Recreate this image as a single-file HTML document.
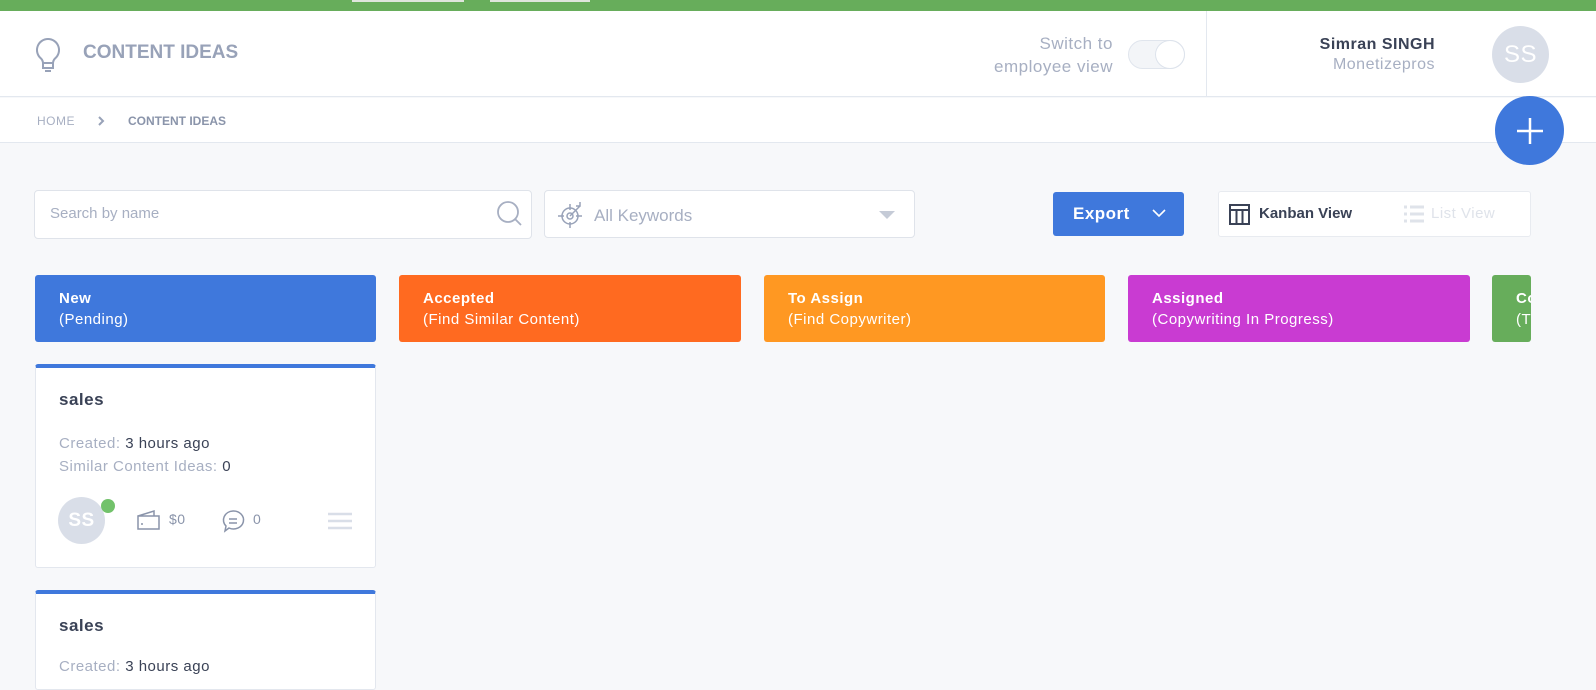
<!DOCTYPE html>
<html><head><style>
*{box-sizing:border-box;margin:0;padding:0}
body{width:1596px;height:676px;overflow:hidden;background:#f7f8fa;font-family:"Liberation Sans",sans-serif;position:relative;letter-spacing:0.5px}
.abs{position:absolute}
.col{position:absolute;top:275px;height:67px;border-radius:3px;color:#fff;font-size:15px;line-height:21px;padding:13px 0 0 24px}
.card{position:absolute;left:35px;width:341px;background:#fff;border:1px solid #e3e7ee;border-top:4px solid #3f78dc;border-radius:3px}
</style></head><body>
<div class="abs" style="left:0;top:0;width:1596px;height:11px;background:#67ad5b"></div>
<div class="abs" style="left:352px;top:0;width:112px;height:2px;background:#dfe6dd"></div>
<div class="abs" style="left:490px;top:0;width:100px;height:2px;background:#dfe6dd"></div>
<div class="abs" style="left:0;top:11px;width:1596px;height:86px;background:#fff;border-bottom:1px solid #e3e8ef"></div>
<svg class="abs" style="left:33px;top:37px" width="30" height="36" viewBox="0 0 30 36"><path d="M15 2a11 11 0 0 0-7 19.5c1.5 1.5 2 3 2 5V31h10v-4.5c0-2 .5-3.5 2-5A11 11 0 0 0 15 2z" fill="none" stroke="#98a2b8" stroke-width="2"/><path d="M10 26h10M12 34h6" stroke="#98a2b8" stroke-width="2"/></svg>
<div class="abs" style="left:83px;top:42px;font-size:19px;font-weight:bold;color:#98a2b8;letter-spacing:0">CONTENT IDEAS</div>
<div class="abs" style="left:940px;top:32px;width:173px;text-align:right;font-size:17px;line-height:23px;color:#a7afc2">Switch to<br>employee view</div>
<div class="abs" style="left:1128px;top:40px;width:57px;height:29px;border-radius:15px;background:#f3f5f8;border:1px solid #e0e5ed"></div>
<div class="abs" style="left:1155px;top:40px;width:30px;height:29px;border-radius:50%;background:#fff;border:1px solid #dde3ec"></div>
<div class="abs" style="left:1206px;top:11px;width:1px;height:86px;background:#e3e8ef"></div>
<div class="abs" style="left:1220px;top:34px;width:215px;text-align:right;font-size:16px;line-height:21px;color:#3a4256;font-weight:bold">Simran SINGH</div>
<div class="abs" style="left:1220px;top:54px;width:215px;text-align:right;font-size:16px;line-height:21px;color:#a7afc2">Monetizepros</div>
<div class="abs" style="left:1492px;top:26px;width:57px;height:57px;border-radius:50%;background:#d9dee8;color:#fff;font-size:24px;text-align:center;line-height:57px">SS</div>
<div class="abs" style="left:0;top:98px;width:1596px;height:45px;background:#fff;border-bottom:1px solid #e3e8ef"></div>
<div class="abs" style="left:37px;top:114px;font-size:12px;color:#a7afc2">HOME</div>
<svg class="abs" style="left:98px;top:116px" width="8" height="10"><path d="M1 1l4 4-4 4" stroke="#98a2b8" stroke-width="2" fill="none"/></svg>
<div class="abs" style="left:128px;top:114px;font-size:12px;color:#8a94aa;font-weight:bold;letter-spacing:0">CONTENT IDEAS</div>
<div class="abs" style="left:1495px;top:96px;width:69px;height:69px;border-radius:50%;background:#3f78dc"></div>
<svg class="abs" style="left:1515px;top:116px" width="30" height="30"><path d="M15 2v26M2 15h26" stroke="#fff" stroke-width="2.5"/></svg>
<div class="abs" style="left:34px;top:190px;width:498px;height:49px;background:#fff;border:1px solid #dfe3ea;border-radius:4px"></div>
<div class="abs" style="left:50px;top:205px;font-size:15px;color:#a7afc2;letter-spacing:0">Search by name</div>
<svg class="abs" style="left:496px;top:200px" width="28" height="28"><circle cx="12" cy="12" r="10" fill="none" stroke="#a7afc2" stroke-width="1.8"/><path d="M19 19l6 6" stroke="#a7afc2" stroke-width="1.8"/></svg>
<div class="abs" style="left:544px;top:190px;width:371px;height:48px;background:#fff;border:1px solid #dfe3ea;border-radius:4px"></div>
<svg class="abs" style="left:556px;top:200px" width="30" height="30"><circle cx="14" cy="16" r="8" fill="none" stroke="#98a2b8" stroke-width="1.5"/><circle cx="14" cy="16" r="3" fill="none" stroke="#98a2b8" stroke-width="1.5"/><path d="M14 4v6M14 22v6M2 16h6M20 16h6M14 16l10-10M20 6h4v-4" stroke="#98a2b8" stroke-width="1.5" fill="none"/></svg>
<div class="abs" style="left:594px;top:206px;font-size:17px;color:#a7afc2;letter-spacing:0">All Keywords</div>
<div class="abs" style="left:879px;top:211px;width:0;height:0;border-left:8px solid transparent;border-right:8px solid transparent;border-top:8px solid #c5cbd7"></div>
<div class="abs" style="left:1053px;top:192px;width:131px;height:44px;background:#3f78dc;border-radius:3px;color:#fff;font-size:17px;font-weight:bold;line-height:44px;padding-left:20px">Export</div>
<svg class="abs" style="left:1152px;top:208px" width="14" height="10"><path d="M1 2l6 6 6-6" stroke="#fff" stroke-width="1.6" fill="none"/></svg>
<div class="abs" style="left:1218px;top:191px;width:313px;height:46px;background:#fff;border:1px solid #e8ebf0;border-radius:3px"></div>
<svg class="abs" style="left:1229px;top:204px" width="22" height="22"><rect x="1" y="1" width="19" height="19" fill="none" stroke="#3a4256" stroke-width="2"/><path d="M1 6h19M7.5 6v14M13.5 6v14" stroke="#3a4256" stroke-width="2"/></svg>
<div class="abs" style="left:1259px;top:205px;font-size:15px;color:#3a4256;font-weight:bold;letter-spacing:0">Kanban View</div>
<svg class="abs" style="left:1403px;top:205px" width="22" height="20"><path d="M1 2h3M7 2h14M1 9h3M7 9h14M1 16h3M7 16h14" stroke="#dfe3ea" stroke-width="3"/></svg>
<div class="abs" style="left:1431px;top:205px;font-size:15px;color:#dfe3ea">List View</div>
<div class="col" style="left:35px;width:341px;background:#3f78dc"><b>New</b><br>(Pending)</div>
<div class="col" style="left:399px;width:342px;background:#ff6a20"><b>Accepted</b><br>(Find Similar Content)</div>
<div class="col" style="left:764px;width:341px;background:#ff9822"><b>To Assign</b><br>(Find Copywriter)</div>
<div class="col" style="left:1128px;width:342px;background:#c93bd2"><b>Assigned</b><br>(Copywriting In Progress)</div>
<div class="col" style="left:1492px;width:39px;background:#67ad5b;overflow:hidden;padding-left:24px;white-space:nowrap"><b>Co</b><br>(T</div>
<div class="card" style="top:364px;height:204px">
<div class="abs" style="left:23px;top:22px;font-size:17px;font-weight:bold;color:#3a4256">sales</div>
<div class="abs" style="left:23px;top:64px;font-size:15px;line-height:23px;color:#a7afc2">Created: <span style="color:#3a4256">3 hours ago</span><br>Similar Content Ideas: <span style="color:#3a4256">0</span></div>
<div class="abs" style="left:22px;top:129px;width:47px;height:47px;border-radius:50%;background:#d9dee8;color:#fff;font-size:19px;font-weight:bold;text-align:center;line-height:47px">SS</div>
<div class="abs" style="left:65px;top:131px;width:14px;height:14px;border-radius:50%;background:#72c26b"></div>
<svg class="abs" style="left:100px;top:141px" width="26" height="22"><path d="M2 7h21v13H2zM2 7l16-5v5" fill="none" stroke="#8a94aa" stroke-width="1.5"/><circle cx="6" cy="15" r="1" fill="#8a94aa"/></svg>
<div class="abs" style="left:133px;top:143px;font-size:14px;color:#8a94aa">$0</div>
<svg class="abs" style="left:184px;top:140px" width="26" height="26"><path d="M13 3a10 9 0 1 1-4 17l-4 3 1-5A10 9 0 0 1 13 3z" fill="none" stroke="#8a94aa" stroke-width="1.5"/><path d="M9 11h8M9 15h8" stroke="#8a94aa" stroke-width="1.5"/></svg>
<div class="abs" style="left:217px;top:143px;font-size:14px;color:#8a94aa">0</div>
<svg class="abs" style="left:292px;top:144px" width="24" height="20"><path d="M0 2h24M0 9h24M0 16h24" stroke="#d9dee8" stroke-width="2.5"/></svg>
</div>
<div class="card" style="top:590px;height:100px">
<div class="abs" style="left:23px;top:22px;font-size:17px;font-weight:bold;color:#3a4256">sales</div>
<div class="abs" style="left:23px;top:64px;font-size:15px;color:#a7afc2">Created: <span style="color:#3a4256">3 hours ago</span></div>
</div>
</body></html>
